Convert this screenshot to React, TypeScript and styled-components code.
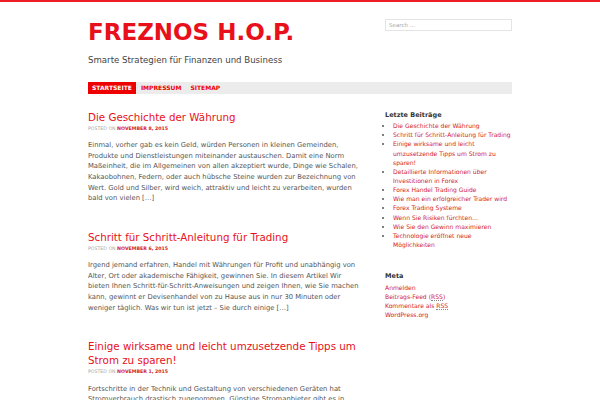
import React from 'react'
import styled, { createGlobalStyle } from 'styled-components'

const RED = '#e8101a'
const LINK = '#d2232a'

const GlobalStyle = createGlobalStyle`
  html, body {
    margin: 0;
    padding: 0;
    background: #fff;
  }
  body {
    font-family: "DejaVu Sans", sans-serif;
    color: #555;
  }
`

const Page = styled.div`
  border-top: 2px solid #ee1c24;
`

const Container = styled.div`
  width: 424px;
  margin: 0 auto;
`

const Header = styled.header`
  display: flex;
  justify-content: space-between;
  align-items: flex-start;
`

const Branding = styled.div`
  padding-top: 15.5px;
`

const SiteTitle = styled.h1`
  margin: 0;
  font-size: 23px;
  line-height: 28px;
  font-weight: bold;
  color: ${RED};
  text-transform: uppercase;
`

const Tagline = styled.p`
  margin: 8.8px 0 0;
  font-size: 8.6px;
  line-height: 12px;
  color: #444;
`

const SearchBox = styled.input`
  margin-top: 17.3px;
  width: 127px;
  height: 11.5px;
  box-sizing: border-box;
  border: 1px solid #e4e4e4;
  padding: 0 3px;
  font-family: "DejaVu Sans", sans-serif;
  font-size: 5.5px;
  color: #999;
  outline: none;

  &::placeholder {
    color: #a8a8a8;
  }
`

const Nav = styled.nav`
  display: flex;
  height: 12.3px;
  margin-top: 15.4px;
  background: #ececec;
`

const NavItem = styled.a<{ $active?: boolean }>`
  display: block;
  padding: 0 4px;
  margin-right: 1px;
  line-height: 12.3px;
  font-size: 6px;
  font-weight: bold;
  text-transform: uppercase;
  text-decoration: none;
  color: ${p => (p.$active ? '#fff' : '#e00')};
  background: ${p => (p.$active ? '#e00' : 'transparent')};
`

const Content = styled.div`
  display: flex;
  gap: 20px;
`

const Main = styled.main`
  width: 277px;
  padding-top: 15.7px;
`

const Post = styled.article`
  margin-bottom: 25.8px;
`

const PostTitle = styled.h2`
  margin: 0;
  font-size: 10.3px;
  line-height: 14px;
  font-weight: normal;
  color: ${RED};
`

const PostMeta = styled.div`
  margin-top: 1.5px;
  font-size: 4.7px;
  line-height: 7px;
  text-transform: uppercase;
  color: #aaa;

  b {
    color: ${LINK};
  }
`

const Excerpt = styled.p`
  margin: 8.1px 0 0;
  font-size: 6.8px;
  line-height: 10.6px;
  color: #555;
`

const Sidebar = styled.aside`
  width: 127px;
  padding-top: 16.6px;
`

const Widget = styled.section`
  margin-bottom: 23px;
`

const WidgetTitle = styled.h3`
  margin: 0 0 1.5px;
  font-size: 6.5px;
  line-height: 9px;
  font-weight: bold;
  color: #333;
`

const LinkList = styled.ul<{ $bullets?: boolean }>`
  margin: 0;
  padding-left: ${p => (p.$bullets ? '8px' : '0')};
  list-style: ${p => (p.$bullets ? 'disc' : 'none')};

  li {
    font-size: 6.05px;
    line-height: 9.15px;
    color: #555;
  }

  a {
    color: ${LINK};
    text-decoration: none;
  }

  abbr {
    text-decoration: none;
    border-bottom: 1px dotted #888;
  }
`

const posts = [
  {
    title: 'Die Geschichte der Währung',
    date: 'November 8, 2015',
    text:
      'Einmal, vorher gab es kein Geld, würden Personen in kleinen Gemeinden, Produkte und Dienstleistungen miteinander austauschen. Damit eine Norm Maßeinheit, die im Allgemeinen von allen akzeptiert wurde, Dinge wie Schalen, Kakaobohnen, Federn, oder auch hübsche Steine wurden zur Bezeichnung von Wert. Gold und Silber, wird weich, attraktiv und leicht zu verarbeiten, wurden bald von vielen […]'
  },
  {
    title: 'Schritt für Schritt-Anleitung für Trading',
    date: 'November 6, 2015',
    text:
      'Irgend jemand erfahren, Handel mit Währungen für Profit und unabhängig von Alter, Ort oder akademische Fähigkeit, gewinnen Sie. In diesem Artikel Wir bieten Ihnen Schritt-für-Schritt-Anweisungen und zeigen Ihnen, wie Sie machen kann, gewinnt er Devisenhandel von zu Hause aus in nur 30 Minuten oder weniger täglich. Was wir tun ist jetzt – Sie durch einige […]'
  },
  {
    title: 'Einige wirksame und leicht umzusetzende Tipps um Strom zu sparen!',
    date: 'November 1, 2015',
    text:
      'Fortschritte in der Technik und Gestaltung von verschiedenen Geräten hat Stromverbrauch drastisch zugenommen. Günstige Stromanbieter gibt es in verschiedenen Regionen, doch die meisten Haushalte zahlen immer noch zu viel […]'
  }
]

const recent = [
  'Die Geschichte der Währung',
  'Schritt für Schritt-Anleitung für Trading',
  'Einige wirksame und leicht umzusetzende Tipps um Strom zu sparen!',
  'Detaillierte Informationen über Investitionen in Forex',
  'Forex Handel Trading Guide',
  'Wie man ein erfolgreicher Trader wird',
  'Forex Trading Systeme',
  'Wenn Sie Risiken fürchten…',
  'Wie Sie den Gewinn maximieren',
  'Technologie eröffnet neue Möglichkeiten'
]

export default function App() {
  return (
    <Page>
      <GlobalStyle />
      <Container>
        <Header>
          <Branding>
            <SiteTitle>Freznos H.O.P.</SiteTitle>
            <Tagline>Smarte Strategien für Finanzen und Business</Tagline>
          </Branding>
          <SearchBox type="search" placeholder="Search …" />
        </Header>
        <Nav>
          <NavItem $active href="#">Startseite</NavItem>
          <NavItem href="#">Impressum</NavItem>
          <NavItem href="#">Sitemap</NavItem>
        </Nav>
        <Content>
          <Main>
            {posts.map(post => (
              <Post key={post.title}>
                <PostTitle>{post.title}</PostTitle>
                <PostMeta>
                  Posted on <b>{post.date}</b>
                </PostMeta>
                <Excerpt>{post.text}</Excerpt>
              </Post>
            ))}
          </Main>
          <Sidebar>
            <Widget>
              <WidgetTitle>Letzte Beiträge</WidgetTitle>
              <LinkList $bullets>
                {recent.map(item => (
                  <li key={item}>
                    <a href="#">{item}</a>
                  </li>
                ))}
              </LinkList>
            </Widget>
            <Widget>
              <WidgetTitle>Meta</WidgetTitle>
              <LinkList>
                <li><a href="#">Anmelden</a></li>
                <li><a href="#">Beitrags-Feed (<abbr>RSS</abbr>)</a></li>
                <li><a href="#">Kommentare als <abbr>RSS</abbr></a></li>
                <li><a href="#">WordPress.org</a></li>
              </LinkList>
            </Widget>
          </Sidebar>
        </Content>
      </Container>
    </Page>
  )
}
